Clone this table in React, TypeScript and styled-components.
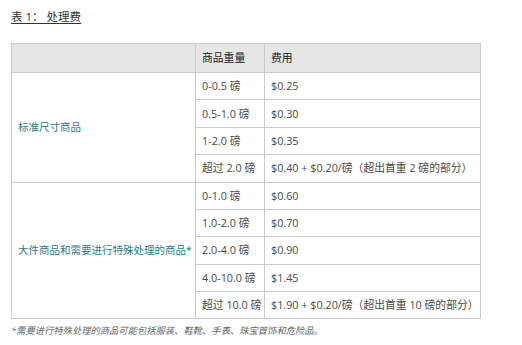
import styled, { createGlobalStyle } from "styled-components";

const GlobalStyle = createGlobalStyle`
  body {
    margin: 0;
    background: #fff;
    font-family: "Open Sans", "Noto Sans CJK SC", sans-serif;
  }
`;

type Row = { weight: string; fee: string };

const groups: { label: string; rows: Row[] }[] = [
  {
    label: "标准尺寸商品",
    rows: [
      { weight: "0-0.5 磅", fee: "$0.25" },
      { weight: "0.5-1.0 磅", fee: "$0.30" },
      { weight: "1-2.0 磅", fee: "$0.35" },
      { weight: "超过 2.0 磅", fee: "$0.40 + $0.20/磅（超出首重 2 磅的部分）" },
    ],
  },
  {
    label: "大件商品和需要进行特殊处理的商品*",
    rows: [
      { weight: "0-1.0 磅", fee: "$0.60" },
      { weight: "1.0-2.0 磅", fee: "$0.70" },
      { weight: "2.0-4.0 磅", fee: "$0.90" },
      { weight: "4.0-10.0 磅", fee: "$1.45" },
      { weight: "超过 10.0 磅", fee: "$1.90 + $0.20/磅（超出首重 10 磅的部分）" },
    ],
  },
];

const App = () => {
  return (
    <>
      <GlobalStyle />
      <Page>
        <Caption>表 1： 处理费</Caption>
        <FeeTable>
          <colgroup>
            <col style={{ width: 184 }} />
            <col style={{ width: 69 }} />
            <col />
          </colgroup>
          <thead>
            <tr>
              <HeadCell />
              <HeadCell>商品重量</HeadCell>
              <HeadCell>费用</HeadCell>
            </tr>
          </thead>
          <tbody>
            {groups.map((g) =>
              g.rows.map((r, i) => (
                <tr key={g.label + r.weight}>
                  {i === 0 && (
                    <GroupCell rowSpan={g.rows.length}>{g.label}</GroupCell>
                  )}
                  <Cell>{r.weight}</Cell>
                  <Cell>{r.fee}</Cell>
                </tr>
              ))
            )}
          </tbody>
        </FeeTable>
        <Note>*需要进行特殊处理的商品可能包括服装、鞋靴、手表、珠宝首饰和危险品。</Note>
      </Page>
    </>
  );
};

const Page = styled.div`
  padding: 9px 11px 0 11px;
  width: 470px;
`;

const Caption = styled.div`
  font-size: 11.5px;
  line-height: 16px;
  color: #333;
  text-decoration: underline;
  text-underline-offset: 2px;
  margin-bottom: 18px;
`;

const FeeTable = styled.table`
  width: 470px;
  border-collapse: collapse;
  table-layout: fixed;
  font-size: 10.8px;
  line-height: 16px;
  border: 1px solid #cbcbcb;
`;

const HeadCell = styled.th`
  background: #e6e6e6;
  color: #222;
  font-weight: normal;
  text-align: left;
  padding: 6px 6px;
  border: 1px solid #cbcbcb;
`;

const Cell = styled.td`
  color: #4a4a4a;
  padding: 5.2px 6px;
  border: 1px solid #cbcbcb;
  white-space: nowrap;
`;

const GroupCell = styled(Cell)`
  color: #1f7c87;
  vertical-align: middle;
  font-size: 10.5px;
`;

const Note = styled.div`
  margin-top: 5px;
  font-size: 9.3px;
  line-height: 14px;
  font-style: italic;
  color: #666;
`;

export default App;
